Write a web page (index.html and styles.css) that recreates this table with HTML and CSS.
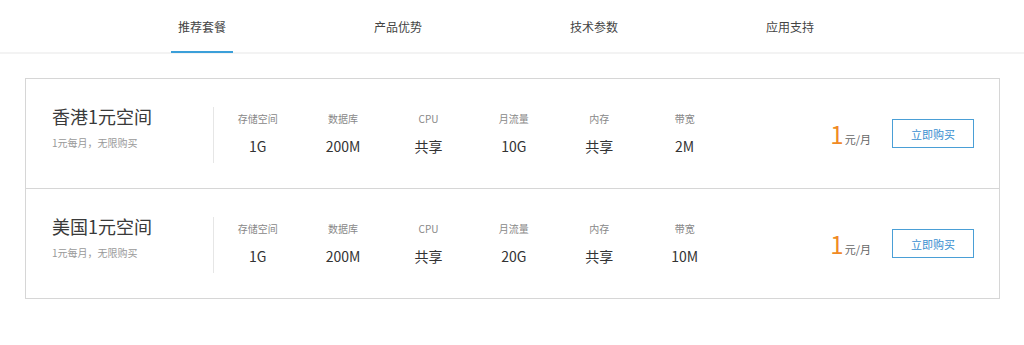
FILE: index.html
```html
<!DOCTYPE html>
<html lang="zh-CN">
<head>
    <meta charset="UTF-8">
    <title>推荐套餐</title>
    <link rel="stylesheet" href="styles.css">
</head>
<body>
    <!-- 标签栏 -->
    <div class="tabs">
        <div class="tabs-inner">
            <a class="tab active">推荐套餐</a>
            <a class="tab">产品优势</a>
            <a class="tab">技术参数</a>
            <a class="tab">应用支持</a>
        </div>
    </div>

    <!-- 套餐列表 -->
    <div class="plans">
        <div class="plan">
            <div class="plan-name">
                <h3>香港1元空间</h3>
                <p>1元每月，无限购买</p>
            </div>
            <div class="specs">
                <div class="spec"><span>存储空间</span><b>1G</b></div>
                <div class="spec"><span>数据库</span><b>200M</b></div>
                <div class="spec"><span>CPU</span><b>共享</b></div>
                <div class="spec"><span>月流量</span><b>10G</b></div>
                <div class="spec"><span>内存</span><b>共享</b></div>
                <div class="spec"><span>带宽</span><b>2M</b></div>
            </div>
            <div class="price"><em>1</em>元/月</div>
            <a class="buy-btn">立即购买</a>
        </div>
        <div class="plan">
            <div class="plan-name">
                <h3>美国1元空间</h3>
                <p>1元每月，无限购买</p>
            </div>
            <div class="specs">
                <div class="spec"><span>存储空间</span><b>1G</b></div>
                <div class="spec"><span>数据库</span><b>200M</b></div>
                <div class="spec"><span>CPU</span><b>共享</b></div>
                <div class="spec"><span>月流量</span><b>20G</b></div>
                <div class="spec"><span>内存</span><b>共享</b></div>
                <div class="spec"><span>带宽</span><b>10M</b></div>
            </div>
            <div class="price"><em>1</em>元/月</div>
            <a class="buy-btn">立即购买</a>
        </div>
    </div>
</body>
</html>
```

FILE: styles.css
```css
/* 基础样式 */
* {
    box-sizing: border-box;
}

body {
    margin: 0;
    background: #fff;
    font-family: "Microsoft YaHei", "Noto Sans CJK SC", sans-serif;
    color: #333;
}

/* 标签栏 */
.tabs {
    border-bottom: 2px solid #f3f3f3;
}

.tabs-inner {
    display: flex;
    padding-left: 104px;
}

.tab {
    width: 196px;
    height: 52px;
    display: flex;
    justify-content: center;
    align-items: center;
    font-size: 12px;
    color: #444;
    cursor: pointer;
}

.tab.active {
    position: relative;
}

.tab.active::after {
    content: "";
    position: absolute;
    left: 67px;
    width: 62px;
    bottom: -1px;
    height: 2px;
    background: #3b9fd9;
}

/* 套餐列表 */
.plans {
    margin: 24px 24px 0 25px;
    border: 1px solid #d6d6d6;
}

.plan {
    display: flex;
    align-items: center;
    height: 109px;
    padding-left: 26px;
}

.plan + .plan {
    border-top: 1px solid #d6d6d6;
    height: 110px;
}

.plan-name {
    width: 162px;
    height: 56px;
    border-right: 1px solid #e6e6e6;
    margin-top: 2px;
}

.plan-name h3 {
    margin: -3px 0 0;
    font-size: 18px;
    font-weight: normal;
    line-height: 24px;
    color: #3a3a3a;
}

.plan-name p {
    margin: 7px 0 0;
    font-size: 10px;
    color: #999;
}

.specs {
    display: flex;
    margin-left: 1px;
}

.spec {
    width: 85.4px;
    display: flex;
    flex-direction: column;
    align-items: center;
}

.spec span {
    font-size: 10px;
    color: #888;
    line-height: 14px;
}

.spec b {
    margin-top: 11px;
    font-size: 14px;
    font-weight: normal;
    line-height: 18px;
    color: #333;
}

.price {
    margin-left: auto;
    font-size: 11px;
    color: #666;
    display: flex;
    align-items: baseline;
}

.price em {
    font-style: normal;
    font-size: 24px;
    color: #f08a24;
    margin-right: 1px;
}

.buy-btn {
    width: 82px;
    height: 29px;
    margin: 0 25px 0 21px;
    border: 1px solid #4a9fd6;
    color: #3a8fd0;
    font-size: 11px;
    display: flex;
    align-items: center;
    justify-content: center;
    cursor: pointer;
}
```
